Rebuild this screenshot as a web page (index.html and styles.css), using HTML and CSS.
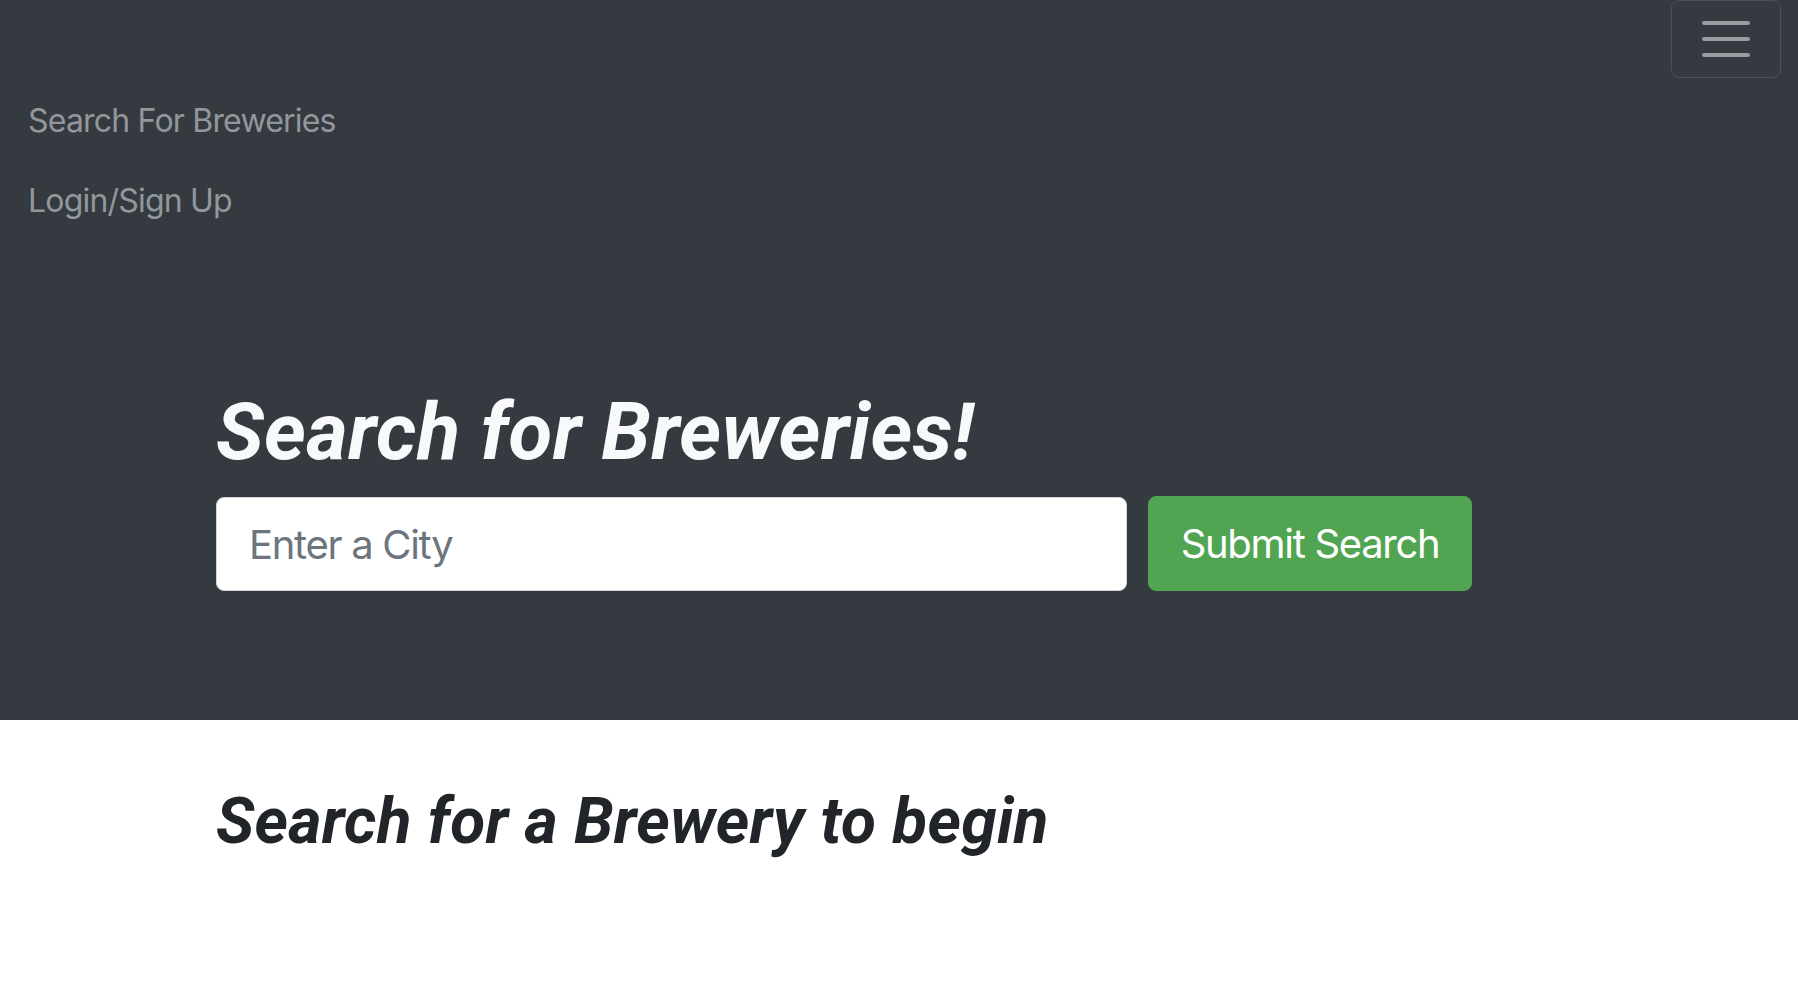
FILE: index.html
```html
<!DOCTYPE html>
<html lang="en">
<head>
<meta charset="utf-8">
<title>Search for Breweries</title>
<link rel="stylesheet" href="styles.css">
</head>
<body>
<header class="top">
  <nav class="navbar">
    <div class="toggler-row">
      <button class="toggler" type="button" aria-label="Toggle navigation">
        <svg class="toggler-icon" viewBox="0 0 30 30" width="60" height="60">
          <path d="M4 7h22M4 15h22M4 23h22" stroke="rgba(255,255,255,0.5)" stroke-width="2" stroke-linecap="round" fill="none"/>
        </svg>
      </button>
    </div>
    <ul class="nav-links">
      <li><a class="nav-link" href="#">Search For Breweries</a></li>
      <li><a class="nav-link" href="#">Login/Sign Up</a></li>
    </ul>
  </nav>
  <section class="hero">
    <div class="container">
      <h1 class="hero-title">Search for Breweries!</h1>
      <form class="search-form">
        <input class="city-input" type="text" placeholder="Enter a City">
        <button class="submit-btn" type="button">Submit Search</button>
      </form>
    </div>
  </section>
</header>
<main class="results">
  <div class="container">
    <h2 class="results-title">Search for a Brewery to begin</h2>
  </div>
</main>
</body>
</html>
```

FILE: styles.css
```css
* { box-sizing: border-box; }

html, body {
  margin: 0;
  padding: 0;
  background: #ffffff;
  font-family: "Inter", "Noto Sans", sans-serif;
  color: #212529;
}

.top {
  background: #343a40;
  min-height: 720px;
}

.navbar {
  display: flex;
  flex-direction: column;
  padding: 0 17px 16px 28px;
}

.toggler-row {
  display: flex;
  justify-content: flex-end;
}

.toggler {
  display: flex;
  align-items: center;
  justify-content: center;
  width: 110px;
  height: 78px;
  padding: 0;
  background: transparent;
  border: 1px solid #4a5055;
  border-radius: 8px;
  margin-bottom: 3px;
}

.toggler-icon { display: block; }

.nav-links {
  list-style: none;
  margin: 0 0 -1px;
  padding: 0;
}

.nav-link {
  display: block;
  padding: 16px 0;
  font-size: 32px;
  line-height: 48px;
  letter-spacing: -0.8px;
  color: #93979b;
  text-decoration: none;
}

.hero {
  padding: 128px 0 128px;
}

.container {
  width: 1366px;
  margin: 0 auto;
}

.hero-title {
  margin: 0 0 16px;
  font-family: "Roboto", "Liberation Sans", sans-serif;
  font-style: italic;
  font-weight: 700;
  font-size: 80px;
  line-height: 96px;
  letter-spacing: 0.3px;
  color: #f8f9fa;
}

.search-form {
  display: flex;
  align-items: flex-start;
  gap: 21px;
}

.city-input {
  width: 911px;
  height: 94px;
  margin-top: 1px;
  padding: 0 32px;
  border: 1px solid #ced4da;
  border-radius: 8px;
  background: #ffffff;
  font-family: "Inter", "Noto Sans", sans-serif;
  font-size: 40px;
  letter-spacing: -1.3px;
  color: #495057;
  outline: none;
}

.city-input::placeholder { color: #6c757d; }

.submit-btn {
  width: 324px;
  height: 95px;
  padding: 0;
  border: 1px solid #51a552;
  border-radius: 8px;
  background: #51a552;
  color: #ffffff;
  font-family: "Inter", "Noto Sans", sans-serif;
  font-size: 40px;
  letter-spacing: -1.3px;
}

.results {
  padding-top: 63px;
}

.results-title {
  margin: 0;
  font-family: "Roboto", "Liberation Sans", sans-serif;
  font-style: italic;
  font-weight: 700;
  font-size: 64px;
  line-height: 77px;
  letter-spacing: 0.25px;
  color: #212529;
}
```
